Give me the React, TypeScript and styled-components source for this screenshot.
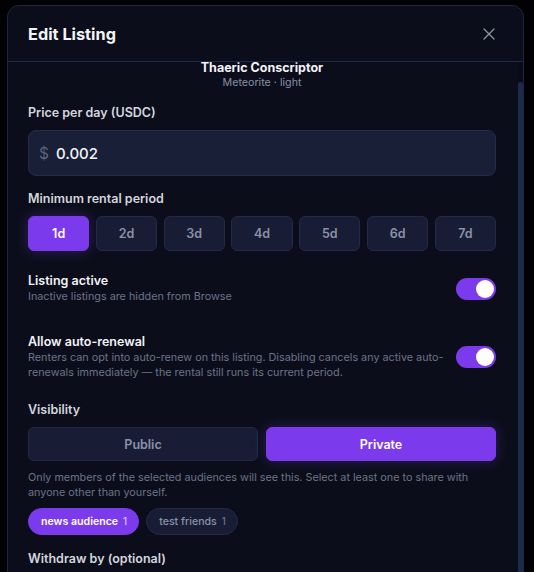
import React from "react";
import styled, { createGlobalStyle } from "styled-components";

const Global = createGlobalStyle`
  html, body { margin: 0; padding: 0; background: #000000; overflow: hidden; }
  body { font-family: Inter, "Noto Sans", sans-serif; -webkit-font-smoothing: antialiased; }
  * { box-sizing: border-box; }
`;

const Page = styled.div`
  width: 534px;
  height: 572px;
  background: #020205;
  padding: 5px 0 0 7px;
  overflow: hidden;
`;

const Modal = styled.div`
  width: 517px;
  height: 620px;
  background: #0b0e1a;
  border: 1px solid #1c2542;
  border-radius: 12px;
  display: flex;
  flex-direction: column;
  overflow: hidden;
`;

const Header = styled.div`
  height: 56px;
  flex: none;
  display: flex;
  align-items: center;
  justify-content: space-between;
  padding: 0 24px 0 20px;
  border-bottom: 1px solid #1f2a4b;
`;

const Title = styled.h2`
  margin: 0;
  font-size: 16.3px;
  font-weight: 700;
  color: #f3f4f8;
`;

const Close = styled.button`
  width: 20px;
  height: 20px;
  padding: 0;
  border: none;
  background: transparent;
  color: #8d94a8;
  display: flex;
  align-items: center;
  justify-content: center;
`;

const BodyRow = styled.div`
  flex: 1;
  display: flex;
  min-height: 0;
`;

const Content = styled.div`
  flex: 1;
  padding: 0 22px 0 20px;
  display: flex;
  flex-direction: column;
`;

const ScrollTrack = styled.div`
  width: 5px;
  flex: none;
  background: #090c16;
  padding-top: 20px;
`;

const ScrollThumb = styled.div`
  height: 600px;
  background: #1e2a4c;
  border-radius: 3px 3px 0 0;
`;

const Item = styled.div`
  text-align: center;
  margin-top: -2px;
`;

const ItemName = styled.div`
  font-size: 12.5px;
  line-height: 16px;
  font-weight: 700;
  color: #f3f4f8;
`;

const ItemMeta = styled.div`
  font-size: 10.7px;
  line-height: 14px;
  color: #8790a6;
`;

const Label = styled.div<{ $mt: number }>`
  margin-top: ${(p) => p.$mt}px;
  font-size: 12.5px;
  line-height: 16px;
  font-weight: 600;
  color: #d3d6df;
`;

const InputBox = styled.div`
  margin-top: 9px;
  height: 46px;
  border-radius: 8px;
  background: #1a1f38;
  border: 1px solid #252c4a;
  display: flex;
  align-items: center;
  padding: 0 10px;
  gap: 7px;
`;

const Dollar = styled.span`
  font-size: 15.5px;
  color: #5c647d;
`;

const Value = styled.span`
  font-size: 15px;
  font-weight: 500;
  color: #f3f4f8;
`;

const DayGrid = styled.div`
  margin-top: 9px;
  display: grid;
  grid-template-columns: repeat(7, 1fr);
  gap: 6.5px;
`;

const DayBtn = styled.button<{ $active?: boolean }>`
  height: 35px;
  border-radius: 6px;
  font-family: inherit;
  font-size: 12.5px;
  font-weight: 600;
  padding: 0;
  border: 1px solid ${(p) => (p.$active ? "#7c3aed" : "#232a47")};
  background: ${(p) => (p.$active ? "#7c3aed" : "#181d35")};
  color: ${(p) => (p.$active ? "#ffffff" : "#8a92a8")};
  box-shadow: ${(p) => (p.$active ? "0 0 14px rgba(124, 58, 237, 0.35)" : "none")};
`;

const ToggleRow = styled.div<{ $mt: number }>`
  margin-top: ${(p) => p.$mt}px;
  display: flex;
  align-items: center;
  justify-content: space-between;
  gap: 10px;
`;

const ToggleText = styled.div`
  flex: 1;
`;

const ToggleTitle = styled.div`
  font-size: 12.5px;
  line-height: 16px;
  font-weight: 600;
  color: #f1f3f7;
`;

const Hint = styled.div`
  font-size: 10.8px;
  line-height: 15px;
  color: #6b7289;
`;

const Switch = styled.div<{ $on?: boolean }>`
  width: 40px;
  height: 22px;
  flex: none;
  border-radius: 11px;
  background: ${(p) => (p.$on ? "#7c3aed" : "#2a3150")};
  display: flex;
  align-items: center;
  justify-content: ${(p) => (p.$on ? "flex-end" : "flex-start")};
  padding: 0 2px;
`;

const Knob = styled.div`
  width: 18px;
  height: 18px;
  border-radius: 50%;
  background: #ffffff;
`;

const Seg = styled.div`
  margin-top: 9px;
  display: grid;
  grid-template-columns: 1fr 1fr;
  gap: 8px;
`;

const SegBtn = styled.button<{ $active?: boolean }>`
  height: 34px;
  border-radius: 6px;
  font-family: inherit;
  font-size: 12.5px;
  font-weight: 600;
  border: 1px solid ${(p) => (p.$active ? "#7c3aed" : "#232a47")};
  background: ${(p) => (p.$active ? "#7c3aed" : "#181d35")};
  color: ${(p) => (p.$active ? "#ffffff" : "#8a92a8")};
  box-shadow: ${(p) => (p.$active ? "0 0 14px rgba(124, 58, 237, 0.3)" : "none")};
`;

const HelpText = styled(Hint)`
  margin-top: 9px;
`;

const Chips = styled.div`
  margin-top: 8px;
  display: flex;
  gap: 7px;
`;

const Chip = styled.div<{ $active?: boolean }>`
  height: 27px;
  border-radius: 14px;
  padding: 0 11px 0 12px;
  display: flex;
  align-items: center;
  gap: 5px;
  font-size: 10.6px;
  font-weight: ${(p) => (p.$active ? 600 : 500)};
  background: ${(p) => (p.$active ? "#7c3aed" : "#181d35")};
  border: 1px solid ${(p) => (p.$active ? "#7c3aed" : "#232a47")};
  color: ${(p) => (p.$active ? "#ffffff" : "#8a92a8")};
`;

const Count = styled.span<{ $active?: boolean }>`
  font-size: 9.8px;
  font-weight: 500;
  color: ${(p) => (p.$active ? "#d6c6fb" : "#6b7289")};
`;

const days = ["1d", "2d", "3d", "4d", "5d", "6d", "7d"];

export default function App() {
  return (
    <>
      <Global />
      <Page>
        <Modal>
          <Header>
            <Title>Edit Listing</Title>
            <Close aria-label="Close">
              <svg width="12" height="12" viewBox="0 0 12 12" fill="none" stroke="currentColor" strokeWidth="1.3" strokeLinecap="round">
                <path d="M1 1 L11 11 M11 1 L1 11" />
              </svg>
            </Close>
          </Header>
          <BodyRow>
            <Content>
              <Item>
                <ItemName>Thaeric Conscriptor</ItemName>
                <ItemMeta>Meteorite · light</ItemMeta>
              </Item>

              <Label $mt={15}>Price per day (USDC)</Label>
              <InputBox>
                <Dollar>$</Dollar>
                <Value>0.002</Value>
              </InputBox>

              <Label $mt={15}>Minimum rental period</Label>
              <DayGrid>
                {days.map((d, i) => (
                  <DayBtn key={d} $active={i === 0}>
                    {d}
                  </DayBtn>
                ))}
              </DayGrid>

              <ToggleRow $mt={22}>
                <ToggleText>
                  <ToggleTitle>Listing active</ToggleTitle>
                  <Hint>Inactive listings are hidden from Browse</Hint>
                </ToggleText>
                <Switch $on>
                  <Knob />
                </Switch>
              </ToggleRow>

              <ToggleRow $mt={30}>
                <ToggleText>
                  <ToggleTitle>Allow auto-renewal</ToggleTitle>
                  <Hint>
                    Renters can opt into auto-renew on this listing. Disabling cancels any active auto-renewals
                    immediately — the rental still runs its current period.
                  </Hint>
                </ToggleText>
                <Switch $on>
                  <Knob />
                </Switch>
              </ToggleRow>

              <Label $mt={22}>Visibility</Label>
              <Seg>
                <SegBtn>Public</SegBtn>
                <SegBtn $active>Private</SegBtn>
              </Seg>
              <HelpText>
                Only members of the selected audiences will see this. Select at least one to share with anyone
                other than yourself.
              </HelpText>
              <Chips>
                <Chip $active>
                  news audience <Count $active>1</Count>
                </Chip>
                <Chip>
                  test friends <Count>1</Count>
                </Chip>
              </Chips>

              <Label $mt={16}>Withdraw by (optional)</Label>
            </Content>
            <ScrollTrack>
              <ScrollThumb />
            </ScrollTrack>
          </BodyRow>
        </Modal>
      </Page>
    </>
  );
}
